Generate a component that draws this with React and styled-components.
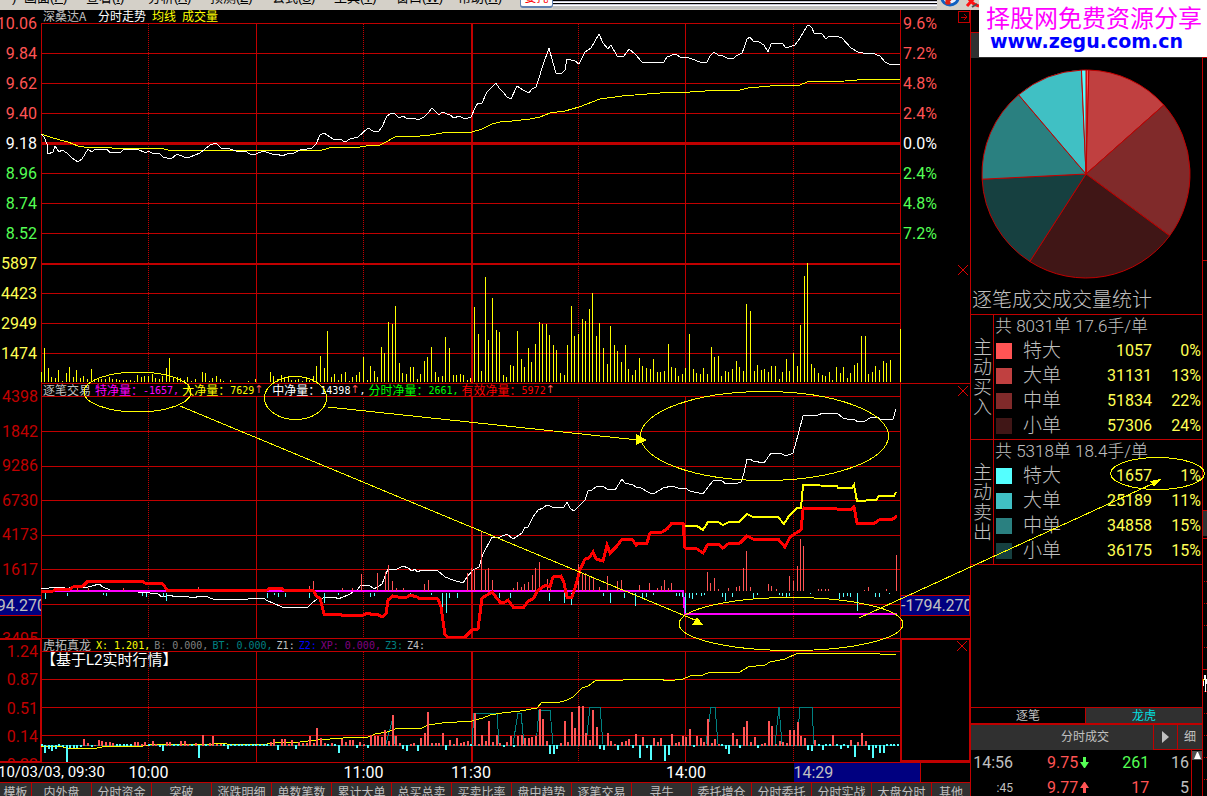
import React from "react";
import styled, { createGlobalStyle } from "styled-components";

const RED = "#c00000";
const ROSE = "#ff5454";
const GREEN = "#54ff54";
const LEMON = "#ffff54";
const SILVER = "#c0c0c0";

const menus = [
  ["画面", "P"],
  ["查看", "I"],
  ["分析", "A"],
  ["预测", "Z"],
  ["公式", "S"],
  ["工具", "T"],
  ["窗口", "W"],
  ["帮助", "H"],
];

const bottomTabs = [
  "模板", "内外盘", "分时资金", "突破", "涨跌明细", "单数笔数", "累计大单", "总买总卖", "买卖比率",
  "盘中趋势", "逐笔交易", "寻牛", "委托增仓", "分时委托", "分时实战", "大盘分时", "其他",
];

const priceLabels = [
  ["10.06", ROSE], ["9.84", ROSE], ["9.62", ROSE], ["9.40", ROSE], ["9.18", "#fff"],
  ["8.96", GREEN], ["8.74", GREEN], ["8.52", GREEN],
  ["5897", LEMON], ["4423", LEMON], ["2949", LEMON], ["1474", LEMON],
];
const percentLabels = [
  ["9.6%", ROSE], ["7.2%", ROSE], ["4.8%", ROSE], ["2.4%", ROSE], ["0.0%", "#fff"],
  ["2.4%", GREEN], ["4.8%", GREEN], ["7.2%", GREEN], ["", ""], ["", ""], ["", ""], ["", ""],
];
const netLabels = ["4398", "1842", "9286", "6730", "4173", "1617", "", "3495"];
const tigerLabels = ["1.24", "0.87", "0.51", "0.14", "0.22"];

const priceLine =
  "41,134 44,137 47,144 48,154 53,152 55,146 59,152 62,150 67,153 72,158 78,162 82,159 88,149 92,152 95,149 107,149 110,153 121,152 124,149 137,149 146,153 148,151 152,153 159,153 163,157 171,159 177,154 184,157 190,157 200,153 210,145 216,143 221,148 230,149 239,152 245,151 250,154 256,154 263,151 272,154 277,154 282,156 287,154 294,153 300,150 307,149 312,148 316,144 320,135 324,133 333,139 340,139 345,142 350,139 358,137 368,128 373,131 378,132 382,127 387,116 392,113 395,114 399,118 403,116 406,118 414,118 418,120 424,117 428,113 432,108 435,111 439,115 442,112 450,115 454,118 459,116 465,119 471,117 475,108 478,103 482,103 487,92 496,83 499,88 503,92 507,97 511,99 517,86 523,90 529,93 532,89 536,87 539,78 543,65 549,48 553,63 556,73 561,74 565,70 567,59 575,61 579,64 585,52 591,48 599,34 603,43 608,49 611,45 617,56 624,56 629,49 635,54 642,62 660,63 664,62 667,57 675,54 682,58 686,57 695,60 702,63 707,62 710,56 714,52 718,55 723,56 727,58 733,59 736,56 742,53 744,48 747,39 750,37 753,41 759,42 764,45 768,52 771,44 776,43 783,44 786,48 795,45 800,38 807,26 809,25 812,28 814,33 822,34 826,39 829,36 832,37 836,36 842,38 851,48 858,52 868,54 872,53 880,56 885,62 889,64 900,64";
const averageLine =
  "41,134 50,137 60,140 68,142 78,146 84,147 110,147 112,148 160,148 168,150 322,150 333,147 360,147 366,146 380,145 386,142 395,137 405,136 420,136 430,135 448,132 472,132 482,129 492,124 500,122 512,121 530,119 540,117 550,113 565,111 579,107 600,99 622,96 660,93 690,92 705,91 740,90 748,88 770,86 793,85 800,85 807,82 845,81 870,79 900,79";
const midNetLine =
  "41,588 45,589 49,588 62,587 67,589 72,587 80,588 88,587 92,586 99,584 103,587 110,590 135,590 138,592 150,593 158,594 162,597 170,595 175,597 185,596 193,598 200,596 208,597 215,600 248,599 250,598 263,598 268,601 273,603 282,607 307,608 312,603 317,599 323,598 335,597 338,599 348,595 357,590 361,585 370,586 374,589 382,584 388,569 397,569 403,566 408,568 412,571 415,569 417,572 422,570 437,570 445,577 453,580 463,583 467,577 473,570 479,567 483,554 492,537 500,537 507,534 513,539 522,533 525,527 528,527 533,517 538,510 543,508 547,505 555,508 564,507 567,502 570,508 574,511 580,505 585,500 588,491 592,490 597,486 604,487 607,489 615,490 622,479 625,483 633,485 636,487 639,487 650,493 655,493 663,488 672,486 678,488 685,488 690,491 703,494 708,487 714,480 722,481 726,484 731,483 735,484 741,482 744,473 747,459 750,459 753,461 764,463 771,453 782,454 786,456 793,453 798,435 803,416 818,415 823,413 837,413 843,418 851,420 854,419 858,422 865,421 870,418 877,417 882,420 893,419 896,409";
const validNetLine =
  "41,592 53,591 56,589 70,589 73,587 83,586 88,581 142,581 145,583 163,584 167,590 267,590 270,588 281,588 284,590 313,590 317,597 320,598 324,614 340,614 343,616 363,615 368,613 373,615 377,614 382,617 386,614 388,600 393,596 398,597 407,597 410,595 417,597 420,599 427,598 438,599 441,607 445,635 448,637 465,637 472,630 478,629 482,598 492,592 500,602 505,602 508,600 513,607 524,607 528,601 533,599 538,590 546,585 550,587 553,577 561,576 564,583 567,597 572,597 575,588 580,570 585,559 589,558 593,552 596,559 603,561 607,545 610,553 617,546 622,539 632,539 636,545 638,543 647,543 650,533 662,532 667,529 672,523 683,523 685,548 697,549 703,553 708,544 718,544 723,548 728,544 740,543 747,536 753,539 778,539 785,547 790,537 796,533 801,530 803,510 804,508 837,509 850,510 854,507 857,523 875,523 879,520 893,519 897,516";
const bigNetLine =
  "685,526 697,526 703,530 708,522 718,522 723,525 729,522 739,522 747,514 753,517 778,517 784,524 789,516 797,508 801,508 803,485 837,486 838,488 852,488 854,485 857,501 876,500 879,496 894,496 896,492";
const tigerLine =
  "41,746 63,747 67,748 97,748 107,746 143,746 150,745 213,744 220,743 227,744 267,744 280,742 300,742 317,740 330,739 343,738 345,737 368,737 375,734 387,732 398,728 420,729 428,725 442,723 472,721 483,718 490,715 502,713 520,711 537,708 542,702 550,702 557,703 567,700 573,697 582,688 588,686 595,681 623,680 633,679 640,679 650,680 660,679 667,681 683,679 690,676 703,675 710,672 740,672 748,667 765,665 770,662 785,659 798,653 840,653 870,653 880,654 896,654";
const tigerGates = [
  "386,744 392,721 395,744",
  "472,744 474,713 497,713 499,744",
  "513,744 518,713 521,713 524,744",
  "536,744 539,710 550,710 553,744",
  "586,744 590,707 600,707 603,744",
  "706,744 711,707 715,707 718,744",
  "775,744 779,707 782,744",
  "797,744 800,707 812,707 814,744",
];

// one entry per minute of trading
const volumes = [
  10, 34, 14, 5, 4, 12, 1, 9, 15, 5, 12, 4, 6, 3, 13, 3, 3, 3, 3, 5, 3, 3, 2, 2, 2, 2, 1, 7, 5, 6,
  6, 8, 4, 3, 6, 14, 24, 5, 5, 4, 2, 5, 1, 3, 0, 10, 9, 1, 4, 6, 3, 1, 0, 2, 0, 0, 0, 0, 1, 0,
  3, 0, 0, 0, 10, 6, 3, 7, 4, 6, 2, 2, 3, 1, 4, 2, 6, 16, 26, 14, 51, 5, 8, 2, 8, 10, 1, 5, 7, 10,
  25, 2, 16, 11, 5, 35, 29, 60, 58, 76, 19, 9, 8, 15, 15, 3, 8, 21, 25, 35, 10, 5, 6, 45, 34, 7, 7, 8, 7, 2,
  4, 75, 48, 11, 105, 42, 84, 52, 50, 7, 5, 17, 16, 51, 23, 15, 34, 20, 38, 60, 58, 58, 47, 37, 32, 9, 7, 37, 76, 46,
  48, 63, 61, 73, 89, 46, 59, 34, 18, 56, 37, 31, 20, 37, 13, 7, 12, 24, 16, 14, 13, 23, 10, 10, 11, 38, 15, 14, 6, 8,
  14, 48, 13, 9, 8, 14, 8, 35, 25, 26, 6, 11, 10, 13, 21, 15, 11, 78, 71, 11, 17, 12, 13, 10, 16, 16, 3, 10, 23, 11,
  29, 16, 57, 106, 119, 18, 14, 9, 7, 6, 10, 2, 15, 9, 15, 4, 9, 17, 19, 46, 46, 8, 10, 16, 12, 21, 19, 22, 0, 0, 53,
];
const momentum = [
  -1, -8, -4, -6, -4, -1, -2, -17, -3, -3, -3, -2, 7, 3, -2, 1, 6, 5, 4, 4, 3, -1, -1, -1, -1, -1, 4, 4, 2, 4,
  -1, 5, 2, -2, -6, 4, 4, -1, -1, 5, 5, 2, -1, 3, -13, 11, -1, 3, 10, 2, 2, -1, -4, -1, -1, -1, -1, -1, -1, -1,
  -1, -1, -1, -1, 4, 7, -5, 7, 7, 2, 6, -4, 4, 3, 3, 10, 3, 18, 8, 3, -1, 3, -1, -8, 7, 4, 6, 6, -3, 4,
  2, -3, 11, 10, 10, 9, 16, 5, 31, 10, 3, -4, -6, 2, 3, -6, 8, 13, 34, 3, 3, 3, 13, -5, 6, 2, 8, 3, 4, 5,
  -1, 33, 2, 11, 5, 25, 4, 11, 3, -2, 4, 10, -2, 10, 11, 8, 8, 9, 10, 37, 27, 5, -9, -9, -4, 3, 25, 4, 34, 18,
  40, 40, 13, 6, 36, 19, -4, -5, 13, 5, 2, -5, 4, 5, 7, -3, 12, -13, 9, -3, -15, 8, 4, 8, -16, -10, 12, 3, 4, 10,
  9, 17, -2, 10, 8, 4, 27, 3, 7, 2, -1, -4, -9, 13, 7, -3, 19, 25, 4, 9, -3, 2, 3, 25, 20, 2, 5, 4, 3, 16,
  16, 24, 10, 8, -5, -6, 6, -1, -5, -1, -1, 11, -1, -4, -1, -3, 6, -12, 4, 13, 5, -5, -13, -3, -8, -8, -1, -1, -1, -1,
];
const inflow = [
  [77, 4], [88, 3], [123, 3], [198, 4], [309, 5], [313, 10], [342, 3], [352, 3], [361, 17], [377, 18], [385, 19],
  [388, 26], [392, 10], [396, 3], [403, 3], [424, 7], [428, 11], [467, 18], [471, 23], [474, 22], [481, 59],
  [485, 21], [488, 23], [492, 11], [513, 3], [517, 9], [521, 4], [524, 7], [528, 9], [532, 16], [535, 23],
  [539, 29], [547, 12], [550, 6], [578, 27], [582, 18], [585, 18], [589, 14], [593, 13], [599, 4], [607, 15],
  [617, 10], [621, 11], [639, 6], [649, 8], [657, 3], [661, 5], [664, 11], [668, 3], [671, 8], [707, 19], [710, 8],
  [714, 13], [718, 2], [728, 3], [736, 4], [739, 5], [743, 23], [746, 40], [750, 4], [768, 7], [771, 5], [776, 2],
  [789, 15], [793, 10], [797, 25], [800, 52], [803, 45], [818, 2], [821, 2], [825, 2], [828, 2], [864, 1],
  [868, 4], [886, 2], [896, 36],
];
const outflow = [
  [45, 6], [67, 3], [103, 2], [106, 3], [142, 3], [146, 4], [163, 4], [166, 8], [267, 5], [274, 2], [278, 4],
  [285, 4], [309, 5], [324, 10], [338, 2], [370, 4], [374, 3], [410, 4], [431, 2], [442, 18], [446, 20], [449, 5],
  [457, 5], [499, 5], [510, 5], [549, 8], [564, 10], [571, 12], [603, 3], [610, 10], [624, 5], [635, 13],
  [642, 5], [646, 4], [653, 2], [676, 3], [679, 3], [682, 4], [685, 20], [689, 5], [692, 6], [696, 2], [701, 3],
  [704, 2], [722, 4], [725, 8], [732, 4], [753, 5], [757, 2], [779, 2], [782, 3], [786, 4], [789, 3], [810, 1],
  [839, 6], [843, 4], [847, 3], [850, 4], [857, 18], [875, 4], [879, 4], [889, 1],
];

const trades = [
  {
    side: "主动买入",
    summary: "共 8031单 17.6手/单",
    rows: [
      ["特大", 1057, 0, "#ff5454"],
      ["大单", 31131, 13, "#c04040"],
      ["中单", 51834, 22, "#802a2a"],
      ["小单", 57306, 24, "#401616"],
    ],
  },
  {
    side: "主动卖出",
    summary: "共 5318单 18.4手/单",
    rows: [
      ["特大", 1657, 1, "#54ffff"],
      ["大单", 25189, 11, "#40c0c4"],
      ["中单", 34858, 15, "#2a8080"],
      ["小单", 36175, 15, "#164040"],
    ],
  },
];

const minuteX = (i) => 41 + Math.floor(i * 3.583);

function Grid({ id, rows, thick, top, bottom }) {
  const height = bottom - top;
  return (
    <g fill={RED}>
      <pattern id={id} width="1" height="2" patternUnits="userSpaceOnUse">
        <rect width="1" height="1" />
      </pattern>
      {rows.map((y) => (
        <rect key={y} x={41} y={y} width={860} height={1} />
      ))}
      {thick.map(([y, h]) => (
        <rect key={y} x={41} y={y} width={860} height={h} />
      ))}
      <rect x={256} y={top} width={1} height={height} />
      <rect x={471} y={top} width={2} height={height} />
      <rect x={685} y={top} width={1} height={height} />
      {[148, 363, 578, 793].map((x) => (
        <rect key={x} x={x} y={top} width={1} height={height} fill={`url(#${id})`} />
      ))}
    </g>
  );
}

function PriceChart() {
  return (
    <Chart viewBox="41 10 860 373" preserveAspectRatio="none">
      <Grid
        id="price-dots"
        rows={[23, 53, 83, 113, 173, 203, 233, 293, 323, 353]}
        thick={[[142, 3], [263, 2]]}
        top={24}
        bottom={383}
      />
      <rect x={41} y={23} width={1} height={360} fill={RED} />
      <rect x={900} y={10} width={1} height={373} fill={RED} />
      {volumes.map((v, i) => (
        <rect key={i} x={Math.min(minuteX(i), 900)} y={382 - v} width={1} height={v} fill="#ffff00" />
      ))}
      <Line points={averageLine} stroke="#ffff00" />
      <Line points={priceLine} stroke="#ffffff" />
    </Chart>
  );
}

function NetChart() {
  return (
    <Chart viewBox="41 383 860 255" preserveAspectRatio="none">
      <Grid id="net-dots" rows={[396, 431, 466, 500, 535, 569, 604]} thick={[]} top={397} bottom={638} />
      <rect x={41} y={383} width={860} height={1} fill={RED} />
      <rect x={41} y={383} width={1} height={255} fill={RED} />
      <rect x={900} y={383} width={1} height={255} fill={RED} />
      <Line points={midNetLine} stroke="#ffffff" />
      <Line points="41,591 683,591 685,614 897,614" stroke="#ff00ff" $weight={2} />
      {inflow.map(([x, v]) => (
        <rect key={x} x={x} y={591 - v} width={1} height={v} fill={ROSE} />
      ))}
      {outflow.map(([x, v]) => (
        <rect key={x} x={x} y={593} width={1} height={v} fill="#54ffff" />
      ))}
      <Line points={bigNetLine} stroke="#ffff00" $weight={2} />
      <Line points={validNetLine} stroke="#ff0000" $weight={3} />
    </Chart>
  );
}

function TigerChart() {
  return (
    <Chart viewBox="41 638 860 124" preserveAspectRatio="none">
      <Grid id="tiger-dots" rows={[638, 651, 679, 707, 735]} thick={[]} top={652} bottom={762} />
      <rect x={41} y={638} width={1} height={124} fill={RED} />
      <rect x={900} y={638} width={1} height={124} fill={RED} />
      <rect x={42} y={745} width={854} height={1} fill="#008080" />
      {tigerGates.map((points) => (
        <Line key={points} points={points} stroke="#008080" />
      ))}
      <Line points={tigerLine} stroke="#ffff00" />
      {momentum.map((v, i) => (
        <rect
          key={i}
          x={minuteX(i)}
          y={v > 0 ? 746 - v : v === -1 ? 744 : 745}
          width={2}
          height={v === -1 ? 2 : Math.abs(v)}
          fill={v > 0 ? ROSE : "#54ffff"}
        />
      ))}
    </Chart>
  );
}

function Pie() {
  const [buy, sell] = trades;
  const slices = [...buy.rows, ...[...sell.rows].reverse()];
  const total = slices.reduce((sum, row) => sum + row[1], 0);
  const at = (n) => {
    const a = (n / total) * Math.PI * 2;
    return `${105 + 104 * Math.sin(a)} ${105 - 104 * Math.cos(a)}`;
  };
  let start = 0;
  return (
    <PieSvg viewBox="0 0 210 210" role="img" aria-label="逐笔成交成交量统计">
      {slices.map(([name, value, , color]) => {
        const from = start;
        start += value;
        return (
          <path
            key={color}
            d={`M105 105L${at(from)}A104 104 0 0 1 ${at(start)}Z`}
            fill={color}
            stroke={RED}
          />
        );
      })}
    </PieSvg>
  );
}

function CloseIcon() {
  return (
    <svg width="10" height="10" viewBox="0 0 10 10" stroke="#e00000">
      <path d="M0 0L10 10M10 0L0 10" />
    </svg>
  );
}

function Annotations() {
  return (
    <Overlay viewBox="0 0 1207 796" preserveAspectRatio="none">
      <g fill="none" stroke="#ffff00">
        <ellipse cx="137.5" cy="392" rx="53.5" ry="20" />
        <ellipse cx="295.5" cy="398" rx="31" ry="21.5" />
        <ellipse cx="764.5" cy="436" rx="124" ry="44.5" />
        <ellipse cx="791" cy="624" rx="112" ry="26.5" />
        <ellipse cx="1157.5" cy="473.5" rx="47" ry="16" />
        <path d="M180 406L695 620M328 407L638 440M859 618L1152 484" />
      </g>
      <path d="M692 625L703 625L697 617ZM636 434L647 440L636 445ZM1150 481L1161 479L1154 487Z" fill="#ffff00" />
    </Overlay>
  );
}

function TradeBlock({ side, summary, rows }) {
  return (
    <Block>
      <Side>{side}</Side>
      <div>
        <Summary>{summary}</Summary>
        <StatTable>
          <tbody>
            {rows.map(([name, value, percent, color]) => (
              <tr key={name}>
                <td>
                  <Swatch $color={color} />
                </td>
                <th scope="row">{name}</th>
                <td>{value}</td>
                <td>{percent}%</td>
              </tr>
            ))}
          </tbody>
        </StatTable>
      </div>
    </Block>
  );
}

function App() {
  return (
    <Page>
      <GlobalStyle />
      <MenuBar>
        <Menu $first>)</Menu>
        {menus.map(([name, key]) => (
          <Menu key={key}>
            {name}(<u>{key}</u>)
          </Menu>
        ))}
        <Entrust>委托</Entrust>
        <Stripes />
        <Tray>
          <svg width="42" height="10" viewBox="0 0 42 10">
            <path d="M5 -2A8 7 0 0 0 21 -2" fill="#e8f0ff" stroke="#1060c0" strokeWidth="3" />
            <path d="M9 4L16 -4M9 0L13 4" stroke="#e02010" strokeWidth="3" />
            <path d="M30 6L39 -4M32 -1Q35 4 42 6" stroke="#ff1010" strokeWidth="3" fill="none" />
            <path d="M35 7L40 4" stroke="#505050" strokeWidth="2" />
          </svg>
        </Tray>
      </MenuBar>

      <Body>
        <Terminal>
          <Panel $grow={373}>
            <Axis>
              <Labels $top={5} $bottom={20} $right={4}>
                {priceLabels.map(([text, color]) => (
                  <Label key={text} $color={color}>{text}</Label>
                ))}
              </Labels>
            </Axis>
            <Plot>
              <PriceChart />
              <Legend $gap={6}>
                <Name>深桑达A</Name>
                <Item $color="#fff">分时走势</Item>
                <Item $color="#ffff00">均线</Item>
                <Item $color="#ffff00">成交量</Item>
              </Legend>
            </Plot>
            <Gutter>
              <Labels $top={5} $bottom={20} $left={2}>
                {percentLabels.map(([text, color], i) => (
                  <Label key={i} $color={color}>{text}</Label>
                ))}
              </Labels>
              <Toggles>
                <ToggleSlot $grow={253} $top={1}>
                  <Toggle aria-label="展开">
                    <svg width="12" height="12" viewBox="0 0 12 12" fill="none" stroke={RED} shapeRendering="crispEdges">
                      <path d="M0.5 0.5H11.5V11.5H0.5ZM3 6H9M6 3L9 6L6 9" />
                    </svg>
                  </Toggle>
                </ToggleSlot>
                <ToggleSlot $grow={120} $top={5}>
                  <Toggle aria-label="关闭成交量"><CloseIcon /></Toggle>
                </ToggleSlot>
              </Toggles>
            </Gutter>
          </Panel>

          <Panel $grow={255}>
            <Axis>
              <Labels $top={5} $bottom={-10} $right={3}>
                {netLabels.map((text, i) => (
                  <Label key={i} $color={RED}>{text}</Label>
                ))}
              </Labels>
              <CursorTag $side="left"><span>-1794.270</span></CursorTag>
            </Axis>
            <Plot>
              <NetChart />
              <Legend $gap={3} $top={1}>
                <Name>逐笔交易</Name>
                <Item $color="#ff00ff">特净量：<Num>-1657,</Num></Item>
                <Item $color="#ffff00">大净量：<Num>7629</Num><Up>↑</Up><Num> </Num></Item>
                <Item $color="#fff">中净量：<Num>14398</Num><Up>↑</Up><Num>,</Num></Item>
                <Item $color="#00ff00">分时净量：<Num>2661,</Num></Item>
                <Item $color="#ff0000">有效净量：<Num>5972</Num><Up>↑</Up></Item>
              </Legend>
            </Plot>
            <Gutter $line>
              <Labels />
              <Toggles>
                <ToggleSlot $grow={1} $top={2}>
                  <Toggle aria-label="关闭逐笔交易"><CloseIcon /></Toggle>
                </ToggleSlot>
              </Toggles>
              <CursorTag $side="right"><span>-1794.270</span></CursorTag>
            </Gutter>
          </Panel>

          <Panel $grow={124}>
            <Axis $framed>
              <Labels $top={3} $bottom={-13} $right={2}>
                {tigerLabels.map((text) => (
                  <Label key={text} $color={RED}>{text}</Label>
                ))}
              </Labels>
            </Axis>
            <Plot>
              <TigerChart />
              <div>
                <Legend $gap={4} $top={1}>
                  <Name>虎拓真龙</Name>
                  <Num $color="#ffff00">X: 1.201,</Num>
                  <Num $color="#808080">B: 0.000,</Num>
                  <Num $color="#008080">BT: 0.000,</Num>
                  <Num $color={SILVER}>Z1:</Num>
                  <Num $color="#0000ff">Z2:</Num>
                  <Num $color="#800080">XP: 0.000,</Num>
                  <Num $color="#008080">Z3:</Num>
                  <Num $color={SILVER}>Z4:</Num>
                </Legend>
                <Caption>【基于L2实时行情】</Caption>
              </div>
            </Plot>
            <Gutter $framed>
              <Labels />
              <Toggles>
                <ToggleSlot $grow={1} $top={1}>
                  <Toggle aria-label="关闭虎拓真龙"><CloseIcon /></Toggle>
                </ToggleSlot>
              </Toggles>
            </Gutter>
          </Panel>

          <TimeAxis>
            <DateLabel>10/03/03, 09:30</DateLabel>
            <Time $col={2}>10:00</Time>
            <Time $col={4}>11:00</Time>
            <Time $col={5}>11:30</Time>
            <Time $col={7}>14:00</Time>
            <TimeCursor>14:29</TimeCursor>
          </TimeAxis>

          <Tabs>
            {bottomTabs.map((name) => (
              <Tab key={name}>{name}</Tab>
            ))}
          </Tabs>
        </Terminal>

        <Sidebar>
          <SideTop />
          <Pie />
          <Title>逐笔成交成交量统计</Title>
          {trades.map((block) => (
            <TradeBlock key={block.side} {...block} />
          ))}
          <Filler />
          <SideTabs>
            <SideTab>逐笔</SideTab>
            <SideTab $lit>龙虎</SideTab>
          </SideTabs>
          <DealBar>
            <span>分时成交</span>
            <DealButton aria-label="下一页">
              <svg width="7" height="12" viewBox="0 0 7 12" fill={SILVER}>
                <path d="M0 0L7 6L0 12Z" />
              </svg>
            </DealButton>
            <DealButton>细</DealButton>
          </DealBar>
          <Deals>
            <DealTable>
              <tbody>
                <tr>
                  <td>14:56</td>
                  <DealCell $color={ROSE}>9.75</DealCell>
                  <td>
                    <svg width="9" height="11" viewBox="0 0 9 11" fill={GREEN}>
                      <path d="M3 0H6V5H9L5 11H4L0 5H3Z" />
                    </svg>
                  </td>
                  <DealCell $color={GREEN}>261</DealCell>
                  <td>16</td>
                </tr>
                <tr>
                  <td><small>:45</small></td>
                  <DealCell $color={ROSE}>9.77</DealCell>
                  <td>
                    <svg width="9" height="11" viewBox="0 0 9 11" fill={ROSE}>
                      <path d="M3 11H6V6H9L5 0H4L0 6H3Z" />
                    </svg>
                  </td>
                  <DealCell $color={ROSE}>17</DealCell>
                  <td>5</td>
                </tr>
              </tbody>
            </DealTable>
            <Scroll>
              <ScrollUp aria-label="向上">
                <svg width="7" height="7" viewBox="0 0 7 7" fill="#fff">
                  <path d="M3 0H4L7 7H0Z" />
                </svg>
              </ScrollUp>
            </Scroll>
          </Deals>
        </Sidebar>

        <Edge viewBox="0 10 4 786" preserveAspectRatio="none">
          <path d="M0 57H4V58H0ZM0 260H4V261H0ZM0 510H4V511H0ZM0 538H4V539H0ZM0 669H4V670H0Z" fill={RED} />
          <rect x="0" y="511" width="4" height="25" fill="#303030" />
          <path
            d="M1 581.5H4M1 603.5H4M1 625.5H4M1 647.5H4M1 691.5H4M1 713.5H4M1 735.5H4M1 757.5H4M1 779.5H4"
            stroke={RED}
            strokeDasharray="1 1"
          />
          <path d="M0 686L2 675L4 684M2 680V692" stroke="#fff" fill="none" />
          <rect x="0" y="679" width="1" height="2" fill="#ffff00" />
        </Edge>
      </Body>

      <Annotations />
      <Banner>
        <strong>择股网免费资源分享</strong>
        <a href="http://www.zegu.com.cn">www.zegu.com.cn</a>
      </Banner>
    </Page>
  );
}

export default App;

const GlobalStyle = createGlobalStyle`
  * {
    box-sizing: border-box;
  }
  body {
    margin: 0;
    background: #000;
    font-family: Roboto, "Noto Sans CJK SC", sans-serif;
    font-size: 16px;
    color: ${SILVER};
  }
  button {
    padding: 0;
    border: 0;
    background: none;
    color: inherit;
    font: inherit;
    cursor: pointer;
  }
  svg {
    display: block;
  }
`;

const Page = styled.div`
  position: relative;
  display: flex;
  flex-direction: column;
  height: 100vh;
  overflow: hidden;
`;

const MenuBar = styled.nav`
  display: flex;
  flex: none;
  align-items: flex-end;
  height: 10px;
  overflow: hidden;
  background: #d4d0c8;
`;

const Menu = styled.button`
  flex: none;
  width: ${(p) => (p.$first ? "24px" : "62px")};
  padding-left: ${(p) => (p.$first ? "12px" : "0")};
  padding-bottom: 4px;
  color: #000;
  font-family: "Liberation Sans", "Noto Sans CJK SC", sans-serif;
  font-size: 13px;
  line-height: 16px;
  text-align: left;
`;

const Entrust = styled.button`
  flex: none;
  align-self: flex-end;
  width: 33px;
  height: 20px;
  margin-bottom: 2px;
  border: 1px solid #6080b0;
  border-bottom-width: 2px;
  border-radius: 3px;
  background: #fff;
  color: #ff0000;
  font-size: 12px;
  line-height: 12px;
`;

const Stripes = styled.div`
  flex: 1;
  height: 10px;
  background: linear-gradient(
    #000 0 1px, #c8c8d8 1px 2px, #fff 2px 3px, #000 3px 4px, #c8c8d8 4px 5px, #fff 5px 6px, ${SILVER} 6px 9px, #d4d0c8 9px
  );
`;

const Tray = styled.div`
  flex: none;
  width: 270px;
  height: 10px;
`;

const Body = styled.div`
  display: flex;
  flex: 1;
  min-height: 0;
`;

const Terminal = styled.main`
  display: flex;
  flex: 1;
  flex-direction: column;
  min-width: 0;
`;

const Panel = styled.section`
  display: flex;
  flex: ${(p) => p.$grow} 1 0;
  min-height: 0;
`;

const Axis = styled.div`
  position: relative;
  display: flex;
  flex: none;
  width: 41px;
  overflow: hidden;
  ${(p) => p.$framed && `border-top: 2px solid ${RED}; border-right: 1px solid ${RED}; border-bottom: 1px solid ${RED};`}
`;

const Gutter = styled.div`
  position: relative;
  display: flex;
  flex: none;
  width: 69px;
  overflow: hidden;
  ${(p) => p.$line && `border-top: 1px solid ${RED};`}
  ${(p) => p.$framed && `border: solid ${RED}; border-width: 2px 1px 2px 1px;`}
`;

const Labels = styled.div`
  display: flex;
  flex: 1;
  flex-direction: column;
  justify-content: space-between;
  align-items: ${(p) => (p.$left ? "flex-start" : "flex-end")};
  min-width: 0;
  margin: ${(p) => p.$top || 0}px ${(p) => p.$right || 0}px ${(p) => p.$bottom || 0}px ${(p) => p.$left || 0}px;
`;

const Label = styled.span`
  height: 18px;
  color: ${(p) => p.$color};
  line-height: 18px;
  white-space: nowrap;
`;

const Toggles = styled.div`
  display: flex;
  flex: none;
  flex-direction: column;
  width: 12px;
`;

const ToggleSlot = styled.div`
  flex: ${(p) => p.$grow} 1 0;
  padding-top: ${(p) => p.$top}px;
`;

const Toggle = styled.button`
  display: block;
`;

const Plot = styled.div`
  display: grid;
  flex: 1;
  grid-template: 100% / 100%;
  min-width: 0;
  > * {
    grid-area: 1 / 1;
  }
`;

const Chart = styled.svg`
  width: 100%;
  height: 100%;
  min-height: 0;
  shape-rendering: crispEdges;
`;

const Line = styled.polyline`
  fill: none;
  stroke-width: ${(p) => p.$weight || 1};
`;

const Legend = styled.div`
  display: flex;
  align-self: start;
  gap: ${(p) => p.$gap}px;
  padding: ${(p) => p.$top || 0}px 0 0 2px;
  font-family: "Noto Sans CJK SC", sans-serif;
  font-size: 12px;
  line-height: 12px;
  white-space: nowrap;
`;

const Name = styled.span`
  min-width: 49px;
`;

const Item = styled.span`
  display: flex;
  color: ${(p) => p.$color};
`;

const Num = styled.span`
  color: ${(p) => p.$color || "inherit"};
  font-family: "DejaVu Sans Mono", monospace;
  font-size: 10px;
  line-height: 14px;
  white-space: pre;
`;

const Up = styled.span`
  width: 9px;
  color: ${ROSE};
  font-family: "DejaVu Sans", sans-serif;
  font-size: 11px;
`;

const Caption = styled.div`
  color: #fff;
  font-size: 15px;
  line-height: 15px;
`;

const CursorTag = styled.div`
  position: absolute;
  top: 83%;
  left: 0;
  right: 0;
  display: flex;
  justify-content: ${(p) => (p.$side === "left" ? "flex-end" : "flex-start")};
  height: 21px;
  border: solid ${RED};
  border-width: 1px ${(p) => (p.$side === "left" ? "0" : "1px")} 1px 0;
  background: #000080;
  line-height: 20px;
  overflow: hidden;
  span {
    margin-right: -5px;
  }
`;

const TimeAxis = styled.div`
  display: grid;
  flex: none;
  grid-template-columns: 41px repeat(8, 1fr) 69px;
  height: 20px;
  border-top: 1px solid ${RED};
  color: #fff;
  line-height: 19px;
`;

const DateLabel = styled.span`
  display: flex;
  grid-area: 1 / 1 / 2 / 3;
  justify-content: flex-end;
  width: 105px;
  overflow: hidden;
  font-size: 15px;
  white-space: nowrap;
`;

const Time = styled.span`
  grid-area: 1 / ${(p) => p.$col} / 2 / span 2;
  text-align: center;
`;

const TimeCursor = styled.span`
  grid-area: 1 / 9 / 2 / 11;
  width: 127px;
  border-right: 1px solid ${RED};
  background: #000080;
  color: ${SILVER};
`;

const Tabs = styled.div`
  display: flex;
  flex: none;
  height: 14px;
  border-top: 1px solid ${RED};
  background: #303030;
  overflow: hidden;
`;

const Tab = styled.button`
  flex: 0 1 60px;
  height: 19px;
  border-right: 1px solid ${RED};
  font-size: 12px;
  line-height: 18px;
  white-space: nowrap;
  &:first-child {
    flex-basis: 32px;
  }
  &:last-child {
    flex: 1;
    border-right: 0;
  }
`;

const Sidebar = styled.aside`
  display: flex;
  flex: none;
  flex-direction: column;
  width: 233px;
  border: solid ${RED};
  border-width: 0 1px;
`;

const SideTop = styled.div`
  flex: none;
  height: 48px;
  padding-top: 22px;
  border-bottom: 1px solid ${RED};
  &::after {
    content: "";
    display: block;
    height: 25px;
    border-top: 1px solid ${RED};
    background: #303030;
  }
`;

const PieSvg = styled.svg`
  flex: none;
  width: 210px;
  height: 210px;
  margin: 11px 0 0 10px;
`;

const Title = styled.h2`
  flex: none;
  margin: 7px 0 0;
  padding-left: 1px;
  border-bottom: 1px solid ${RED};
  font-size: 20px;
  font-weight: 300;
  line-height: 28px;
`;

const Block = styled.section`
  display: grid;
  flex: none;
  grid-template-columns: 23px 1fr;
  border-bottom: 1px solid ${RED};
`;

const Side = styled.div`
  padding: 23px 1px 0 2px;
  border-right: 1px solid ${RED};
  font-size: 19px;
  font-weight: 300;
  line-height: 20px;
  word-break: break-all;
`;

const Summary = styled.div`
  height: 23px;
  padding-left: 1px;
  font-weight: 300;
  font-size: 17px;
  line-height: 23px;
`;

const StatTable = styled.table`
  width: 100%;
  margin-bottom: 1px;
  border-collapse: collapse;
  color: ${LEMON};
  text-align: right;
  td,
  th {
    height: 25px;
    padding: 0;
    line-height: 24px;
  }
  td:first-child {
    width: 29px;
    padding-left: 2px;
  }
  th {
    color: ${SILVER};
    font-size: 19px;
    font-weight: 300;
    text-align: left;
  }
  td:nth-child(3) {
    width: 60px;
  }
  td:last-child {
    width: 50px;
    padding-right: 1px;
  }
`;

const Swatch = styled.div`
  width: 16px;
  height: 16px;
  background: ${(p) => p.$color};
`;

const Filler = styled.div`
  flex: 1;
`;

const SideTabs = styled.div`
  display: grid;
  flex: none;
  grid-template-columns: 114fr 117fr;
  border: solid ${RED};
  border-width: 1px 0 2px;
`;

const SideTab = styled.button`
  height: 15px;
  background: ${(p) => (p.$lit ? "#303030" : "#000")};
  border-left: ${(p) => (p.$lit ? `1px solid ${RED}` : "0")};
  color: ${(p) => (p.$lit ? "#00e0e0" : SILVER)};
  font-size: 12px;
  line-height: 14px;
`;

const DealBar = styled.div`
  display: grid;
  flex: none;
  grid-template-columns: 1fr 24px 25px;
  height: 25px;
  background: #303030;
  font-size: 12px;
  line-height: 24px;
  span {
    padding-left: 46px;
    text-align: center;
  }
`;

const DealButton = styled.button`
  display: flex;
  align-items: center;
  justify-content: center;
  border: solid ${RED};
  border-width: 0 0 1px 1px;
`;

const Deals = styled.div`
  display: flex;
  flex: none;
  height: 46px;
  overflow: hidden;
`;

const DealTable = styled.table`
  flex: 1;
  align-self: flex-start;
  border-collapse: collapse;
  text-align: right;
  td {
    height: 25px;
    padding: 0;
    line-height: 24px;
  }
  td:first-child {
    width: 42px;
  }
  td:nth-child(3) {
    width: 12px;
    padding-left: 2px;
  }
  td:nth-child(4) {
    width: 59px;
  }
  td:last-child {
    padding-right: 2px;
  }
  small {
    font-size: 12px;
  }
`;

const DealCell = styled.td`
  color: ${(p) => p.$color};
`;

const Scroll = styled.div`
  flex: none;
  width: 11px;
  padding-top: 1px;
  border-left: 1px solid ${RED};
`;

const ScrollUp = styled.button`
  display: flex;
  align-items: center;
  justify-content: center;
  width: 10px;
  height: 9px;
  background: #505050;
`;

const Edge = styled.svg`
  flex: none;
  width: 4px;
  height: 100%;
  shape-rendering: crispEdges;
`;

const Overlay = styled.svg`
  position: absolute;
  inset: 0;
  width: 100%;
  height: 100%;
  pointer-events: none;
  shape-rendering: crispEdges;
`;

const Banner = styled.header`
  position: absolute;
  top: 0;
  right: 0;
  display: flex;
  flex-direction: column;
  width: 228px;
  height: 57px;
  padding: 6px 0 0 7px;
  background: #fff;
  strong {
    color: #ff00ff;
    font-size: 24px;
    font-weight: 400;
    line-height: 27px;
  }
  a {
    padding-left: 4px;
    color: #0000ff;
    font-family: "DejaVu Sans", sans-serif;
    font-size: 19px;
    font-weight: 700;
    line-height: 16px;
    text-decoration: none;
  }
`;
